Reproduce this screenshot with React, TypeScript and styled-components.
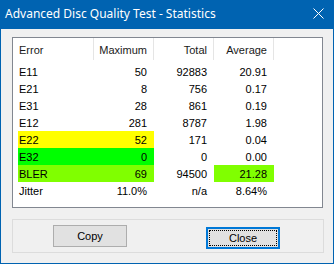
import React from 'react';
import styled, { createGlobalStyle } from 'styled-components';

type Tint = 'none' | 'yellow' | 'green' | 'lime';

interface StatRow {
  name: string;
  maximum: string;
  total: string;
  average: string;
  tint?: Tint;
  averageTint?: Tint;
}

const tints: Record<Tint, string> = {
  none: 'transparent',
  yellow: '#ffff00',
  green: '#00ff00',
  lime: '#80ff00',
};

const GlobalStyle = createGlobalStyle`
  html, body {
    margin: 0;
    padding: 0;
    background: #ffffff;
  }
`;

const Window = styled.div`
  width: 334px;
  height: 264px;
  box-sizing: border-box;
  border: 1px solid #0063b1;
  border-top: none;
  background: #f0f0f0;
  display: flex;
  flex-direction: column;
  font-family: 'Liberation Sans', Arial, sans-serif;
  font-size: 11px;
  color: #000;
`;

const TitleBar = styled.div`
  height: 29px;
  margin: 0 -1px;
  background: #0063b1;
  color: #fff;
  display: flex;
  align-items: center;
  justify-content: space-between;
  padding: 0 10px 2px 5px;
  font-family: 'Noto Sans', 'Open Sans', sans-serif;
  font-size: 12px;
  box-sizing: border-box;
`;

const CloseGlyph = styled.svg`
  width: 11px;
  height: 11px;
  display: block;
`;

const Client = styled.div`
  flex: 1;
  padding: 8px 0 0 11px;
  display: flex;
  flex-direction: column;
`;

const ListBox = styled.div`
  width: 311px;
  height: 171px;
  box-sizing: border-box;
  border: 1px solid #828790;
  background: #fff;
  padding-left: 5px;
`;

const Grid = styled.div`
  display: grid;
  grid-template-columns: 76px 60px 60px 60px;
`;

const HeaderRow = styled(Grid)`
  height: 25px;
`;

const HeaderCell = styled.div<{ $right?: boolean }>`
  position: relative;
  display: flex;
  align-items: center;
  justify-content: ${(p) => (p.$right ? 'flex-end' : 'flex-start')};
  padding: ${(p) => (p.$right ? '0 7px 2px 0' : '0 0 2px 1px')};
  color: #1a1a1a;

  &::after {
    content: '';
    position: absolute;
    right: 0;
    top: 0;
    width: 1px;
    height: 22px;
    background: #e5e5e5;
  }
`;

const DataRow = styled(Grid)`
  height: 17px;
`;

const Cell = styled.div<{ $right?: boolean; $tint: Tint }>`
  display: flex;
  align-items: center;
  justify-content: ${(p) => (p.$right ? 'flex-end' : 'flex-start')};
  padding: ${(p) => (p.$right ? '0 7px 0 0' : '0 0 0 1px')};
  background: ${(p) => tints[p.$tint]};
  white-space: nowrap;
`;

const GroupBox = styled.div`
  margin-top: 11px;
  width: 312px;
  height: 34px;
  box-sizing: border-box;
  border: 1px solid #dcdcdc;
  display: flex;
  align-items: flex-start;
  padding: 5px 0 0 40px;
  gap: 79px;
`;

const PushButton = styled.button<{ $default?: boolean; $drop?: number }>`
  width: 74px;
  height: 22px;
  margin-top: ${(p) => p.$drop ?? 0}px;
  box-sizing: border-box;
  background: #e1e1e1;
  border: ${(p) => (p.$default ? '2px solid #0078d7' : '1px solid #adadad')};
  padding: 0;
  font-family: 'Liberation Sans', Arial, sans-serif;
  font-size: 11px;
  color: #000;
  position: relative;
  display: flex;
  align-items: center;
  justify-content: center;

  ${(p) =>
    p.$default &&
    `
    &::before {
      content: '';
      position: absolute;
      inset: 1px;
      border: 1px dotted #000;
    }
  `}
`;

const rows: StatRow[] = [
  { name: 'E11', maximum: '50', total: '92883', average: '20.91' },
  { name: 'E21', maximum: '8', total: '756', average: '0.17' },
  { name: 'E31', maximum: '28', total: '861', average: '0.19' },
  { name: 'E12', maximum: '281', total: '8787', average: '1.98' },
  { name: 'E22', maximum: '52', total: '171', average: '0.04', tint: 'yellow' },
  { name: 'E32', maximum: '0', total: '0', average: '0.00', tint: 'green' },
  { name: 'BLER', maximum: '69', total: '94500', average: '21.28', tint: 'lime', averageTint: 'lime' },
  { name: 'Jitter', maximum: '11.0%', total: 'n/a', average: '8.64%' },
];

const App: React.FC = () => {
  return (
    <>
      <GlobalStyle />
      <Window>
        <TitleBar>
          <span>Advanced Disc Quality Test - Statistics</span>
          <CloseGlyph viewBox="0 0 11 11">
            <path d="M0.5 0.5 L10.5 10.5 M10.5 0.5 L0.5 10.5" stroke="#fff" strokeWidth="1" />
          </CloseGlyph>
        </TitleBar>
        <Client>
          <ListBox>
            <HeaderRow>
              <HeaderCell>Error</HeaderCell>
              <HeaderCell $right>Maximum</HeaderCell>
              <HeaderCell $right>Total</HeaderCell>
              <HeaderCell $right>Average</HeaderCell>
            </HeaderRow>
            {rows.map((r) => (
              <DataRow key={r.name}>
                <Cell $tint={r.tint ?? 'none'}>{r.name}</Cell>
                <Cell $right $tint={r.tint ?? 'none'}>{r.maximum}</Cell>
                <Cell $right $tint="none">{r.total}</Cell>
                <Cell $right $tint={r.averageTint ?? 'none'}>{r.average}</Cell>
              </DataRow>
            ))}
          </ListBox>
          <GroupBox>
            <PushButton>Copy</PushButton>
            <PushButton $default $drop={2}>Close</PushButton>
          </GroupBox>
        </Client>
      </Window>
    </>
  );
};

export default App;
